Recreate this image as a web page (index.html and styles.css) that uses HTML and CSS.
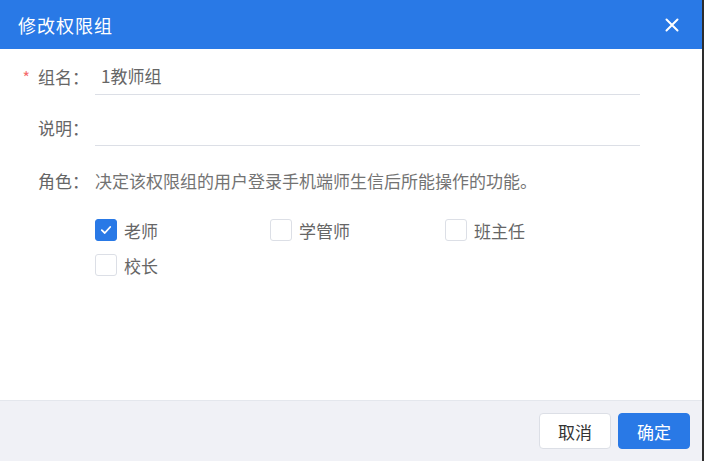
FILE: index.html
```html
<!DOCTYPE html>
<html lang="zh-CN">
<head>
    <meta charset="UTF-8">
    <meta name="viewport" content="width=device-width, initial-scale=1.0">
    <title>修改权限组</title>
    <link rel="stylesheet" href="styles.css">
</head>
<body>

    <!-- Edit permission group dialog -->
    <div class="dialog">
        <div class="dialog-header">
            <span class="dialog-title">修改权限组</span>
            <button type="button" class="dialog-close" aria-label="关闭">
                <svg width="16" height="16" viewBox="0 0 16 16">
                    <path d="M2.5 2.5 L13.5 13.5 M13.5 2.5 L2.5 13.5" stroke="#fff" stroke-width="2" stroke-linecap="round"/>
                </svg>
            </button>
        </div>

        <form class="dialog-body">
            <div class="form-row first-row">
                <label class="form-label" for="group_name"><span class="required">*</span>组名：</label>
                <input type="text" id="group_name" class="form-input" value="1教师组">
            </div>

            <div class="form-row">
                <label class="form-label" for="group_desc">说明：</label>
                <input type="text" id="group_desc" class="form-input" value="">
            </div>

            <div class="form-row role-row">
                <span class="form-label">角色：</span>
                <span class="role-tip">决定该权限组的用户登录手机端师生信后所能操作的功能。</span>
            </div>

            <div class="role-list">
                <label class="check-item">
                    <span class="check-box checked">
                        <svg width="14" height="14" viewBox="0 0 14 14">
                            <path d="M2.8 7.2 L5.8 10 L11.2 4" fill="none" stroke="#fff" stroke-width="1.8" stroke-linecap="round" stroke-linejoin="round"/>
                        </svg>
                    </span>
                    老师
                </label>
                <label class="check-item"><span class="check-box"></span>学管师</label>
                <label class="check-item"><span class="check-box"></span>班主任</label>
                <label class="check-item"><span class="check-box"></span>校长</label>
            </div>
        </form>

        <div class="dialog-footer">
            <button type="button" class="btn">取消</button>
            <button type="button" class="btn btn-primary">确定</button>
        </div>
    </div>

</body>
</html>
```

FILE: styles.css
```css
html, body {
    height: 100%;
}
body {
    margin: 0;
    font-family: "Microsoft YaHei", "Noto Sans CJK SC", "Noto Sans", sans-serif;
    background-color: #fff;
}
.dialog {
    display: flex;
    flex-direction: column;
    height: 100%;
    border-right: 2px solid #2d2d2d;
    box-sizing: border-box;
}
.dialog-header {
    display: flex;
    align-items: center;
    justify-content: space-between;
    height: 49px;
    padding: 0 22px 0 18px;
    background-color: #2979e6;
}
.dialog-title {
    color: #fff;
    font-size: 18px;
    letter-spacing: 1px;
}
.dialog-close {
    display: flex;
    padding: 0;
    border: none;
    background: none;
    cursor: pointer;
}
.dialog-body {
    flex: 1;
    padding: 8px 0 0;
}
.form-row {
    display: flex;
    align-items: center;
    height: 38px;
    margin-bottom: 15px;
}
.first-row {
    margin-bottom: 13px;
}
.form-label {
    width: 95px;
    padding-right: 6px;
    text-align: right;
    color: #666;
    font-size: 17px;
    box-sizing: border-box;
    white-space: nowrap;
}
.required {
    color: #f56c6c;
    margin-right: 8px;
    font-size: 16px;
}
.form-input {
    width: 545px;
    height: 38px;
    padding: 0 6px;
    border: none;
    border-bottom: 1px solid #dcdfe6;
    outline: none;
    font-family: inherit;
    font-size: 17px;
    color: #666;
    box-sizing: border-box;
}
.role-row {
    margin-bottom: 20px;
}
.role-tip {
    color: #737373;
    font-size: 17px;
}
.role-list {
    display: grid;
    grid-template-columns: repeat(3, 175px);
    row-gap: 13px;
    padding-left: 95px;
}
.check-item {
    display: flex;
    align-items: center;
    gap: 7px;
    height: 22px;
    color: #666;
    font-size: 17px;
    cursor: pointer;
}
.check-box {
    display: flex;
    align-items: center;
    justify-content: center;
    width: 22px;
    height: 22px;
    border: 1px solid #dcdfe6;
    border-radius: 3px;
    background-color: #fff;
    box-sizing: border-box;
}
.check-box.checked {
    border-color: #2979e6;
    background-color: #2979e6;
}
.dialog-footer {
    display: flex;
    justify-content: flex-end;
    align-items: center;
    gap: 7px;
    height: 60px;
    padding: 0 12px 0 0;
    border-top: 1px solid #e4e7ed;
    background-color: #f0f1f6;
}
.btn {
    width: 72px;
    height: 36px;
    padding: 0;
    border: 1px solid #dcdfe6;
    border-radius: 4px;
    background-color: #fff;
    color: #333;
    font-family: inherit;
    font-size: 17px;
    cursor: pointer;
}
.btn-primary {
    border-color: #2979e6;
    background-color: #2979e6;
    color: #fff;
}
```
